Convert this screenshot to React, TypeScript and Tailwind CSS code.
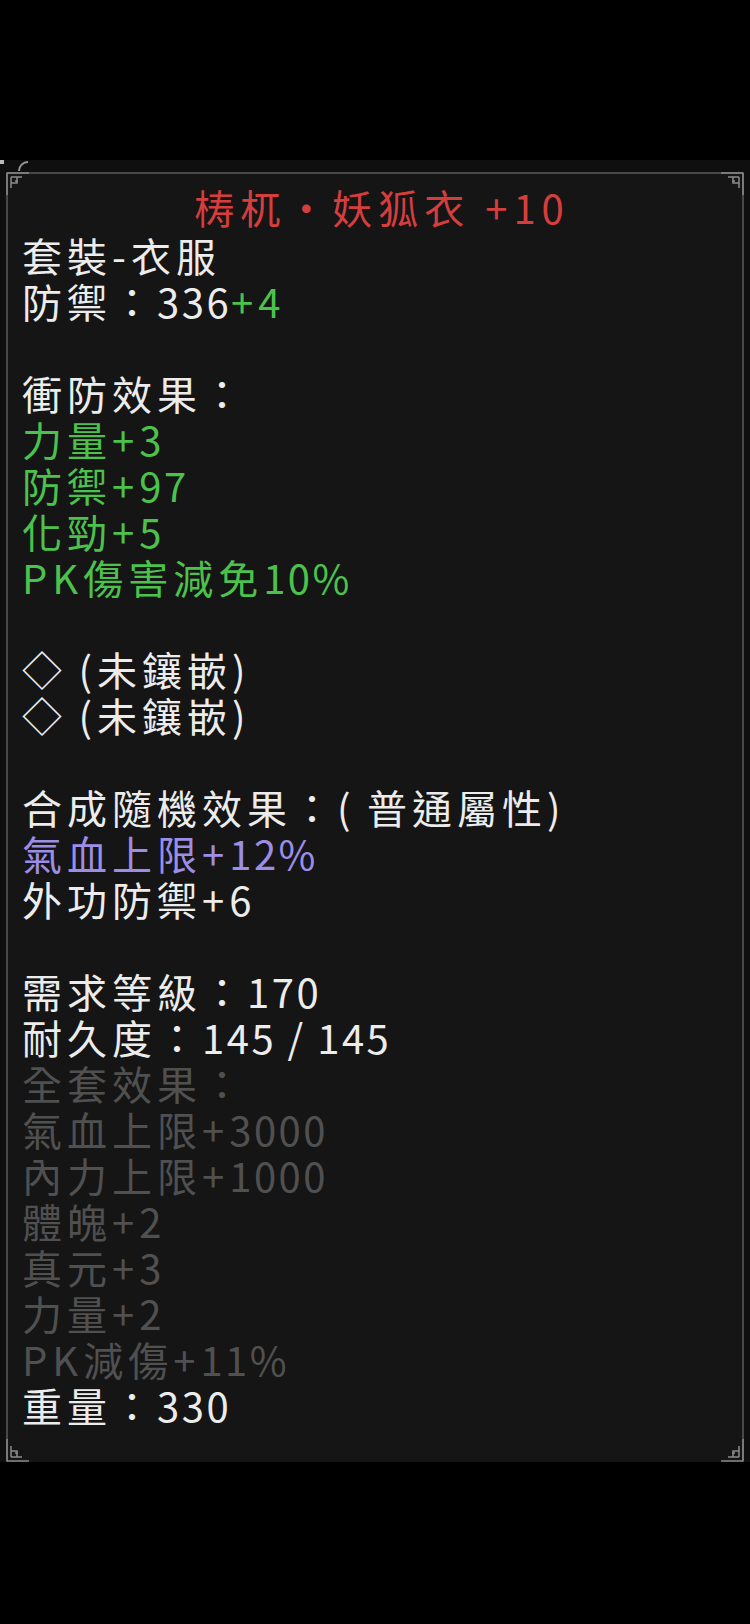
type Seg = { t: string; c: string };
type Line = Seg[] | null;

const W = 'text-[#ececec]';
const G = 'text-[#4cc24c]';
const P = 'text-[#9c8ee6]';
const D = 'text-[#505050]';

const lines: Line[] = [
  [{ t: '套裝-衣服', c: W }],
  [
    { t: '防禦：336', c: W },
    { t: '+4', c: G },
  ],
  null,
  [{ t: '衝防效果：', c: W }],
  [{ t: '力量+3', c: G }],
  [{ t: '防禦+97', c: G }],
  [{ t: '化勁+5', c: G }],
  [{ t: 'PK傷害減免10%', c: G }],
  null,
  [{ t: '◇ (未鑲嵌)', c: W }],
  [{ t: '◇ (未鑲嵌)', c: W }],
  null,
  [{ t: '合成隨機效果：( 普通屬性)', c: W }],
  [{ t: '氣血上限+12%', c: P }],
  [{ t: '外功防禦+6', c: W }],
  null,
  [{ t: '需求等級：170', c: W }],
  [{ t: '耐久度：145 / 145', c: W }],
  [{ t: '全套效果：', c: D }],
  [{ t: '氣血上限+3000', c: D }],
  [{ t: '內力上限+1000', c: D }],
  [{ t: '體魄+2', c: D }],
  [{ t: '真元+3', c: D }],
  [{ t: '力量+2', c: D }],
  [{ t: 'PK減傷+11%', c: D }],
  [{ t: '重量：330', c: W }],
];

// digits and spaces sit a little tighter than the CJK glyphs
function Text({ t }: { t: string }) {
  const parts = t.split(/([0-9 /]+)/).filter(Boolean);
  return (
    <>
      {parts.map((p, i) =>
        /^[0-9 /]+$/.test(p) ? (
          <span key={i} className="tracking-[2.5px]">
            {p}
          </span>
        ) : (
          <span key={i}>{p}</span>
        ),
      )}
    </>
  );
}

function Corner({ className }: { className: string }) {
  return (
    <svg
      className={`absolute w-[24px] h-[24px] ${className}`}
      viewBox="0 0 24 24"
      fill="none"
      stroke="#8a8a8a"
      strokeWidth="1.5"
    >
      <path d="M1 1H23M1 1V23M5 5H16M5 5V16M5 11H11V5M9 9H12" />
    </svg>
  );
}

export default function App() {
  return (
    <div
      className="w-full min-h-[1624px] bg-black pt-[160px]"
      style={{ fontFamily: '"Noto Sans CJK TC", "Noto Sans CJK SC", sans-serif' }}
    >
      <div className="bg-[#0f0f0f] pt-[12px] relative">
        <div className="absolute left-[18px] top-[1px] w-[10px] h-[10px] border-l-2 border-t-2 border-[#9a9a9a] rounded-tl-full" />
        <div className="absolute left-0 top-0 w-[4px] h-[4px] bg-[#bbbbbb]" />
        <div className="relative mx-[6px] bg-[#151515] border-t-2 border-l-2 border-r-2 border-[#484848] pt-[8px] pb-[34px] pl-[14px] flex flex-col text-[40px] leading-[46px] tracking-[5px] whitespace-pre">
          <Corner className="left-[-2px] top-[-2px]" />
          <Corner className="right-[-2px] top-[-2px] -scale-x-100" />
          <Corner className="left-[-2px] bottom-0 -scale-y-100" />
          <Corner className="right-[-2px] bottom-0 -scale-x-100 -scale-y-100" />
          <div className="text-center text-[#d63e3e] leading-[50px] tracking-[6px]">梼杌·妖狐衣 +10</div>
          {lines.map((l, i) => (
            <div key={i} className="h-[46px]">
              {l?.map((s, j) => (
                <span key={j} className={s.c}>
                  <Text t={s.t} />
                </span>
              ))}
            </div>
          ))}
        </div>
      </div>
    </div>
  );
}
